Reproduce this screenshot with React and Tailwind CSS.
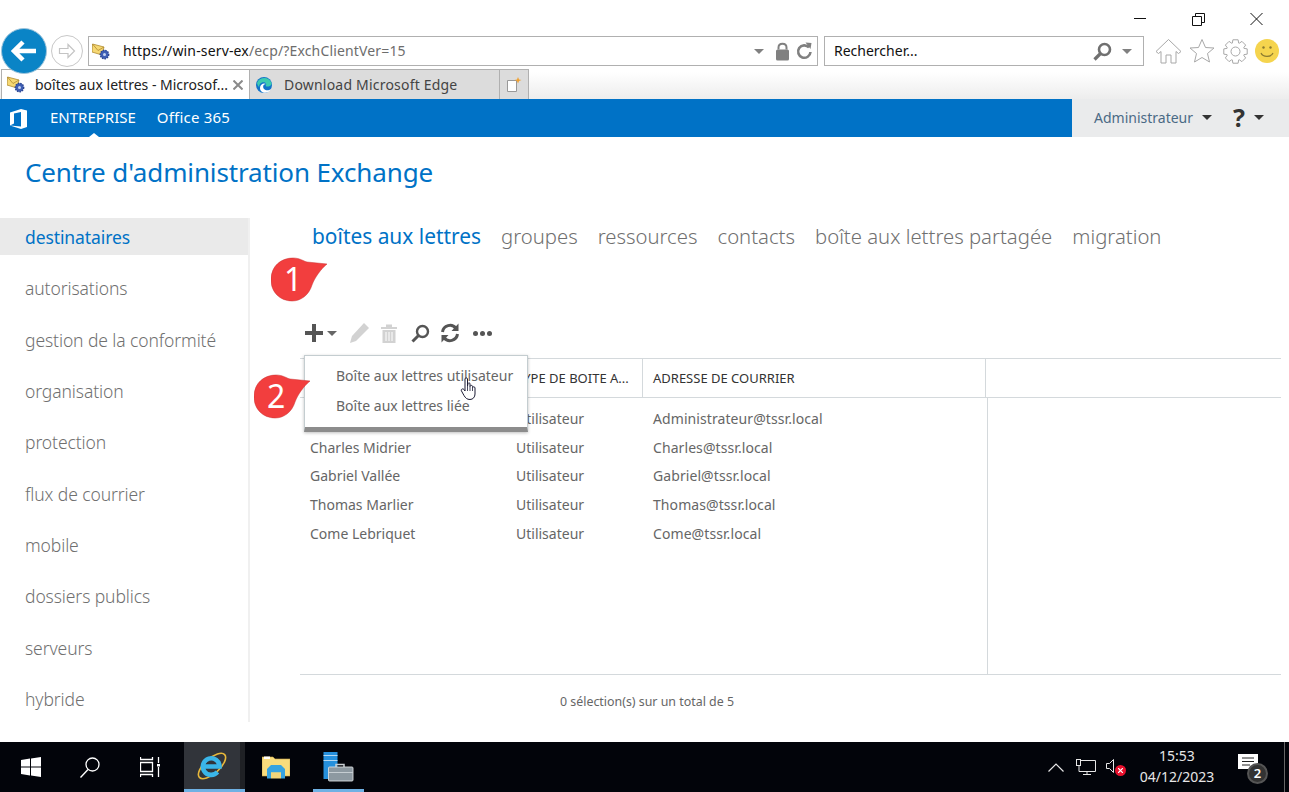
import React from 'react'

const Caret = ({ className = '' }) => <span className={`inline-block w-0 h-0 border-x-[5px] border-x-transparent border-t-[5px] ${className}`} />

const MailIcon = () => (
  <svg width="18" height="17" viewBox="0 0 18 17" className="shrink-0">
    <path d="M0.5 1 L12 4 L10 12 L0 9 Z" fill="#f6d873" stroke="#b08a2e" strokeWidth="0.8" />
    <path d="M0.5 1 L6 7.5 L12 4" fill="none" stroke="#b08a2e" strokeWidth="0.8" />
    <circle cx="12.5" cy="11.5" r="4.2" fill="#3f5fb5" stroke="#2b4590" strokeWidth="1.4" strokeDasharray="1.5 1" />
    <circle cx="12.5" cy="11.5" r="1.5" fill="#c6d4f0" />
  </svg>
)

const EdgeIcon = () => (
  <svg width="18" height="18" viewBox="0 0 18 18" className="shrink-0">
    <circle cx="9" cy="9" r="8" fill="#1173c9" />
    <path d="M2 7 C4 1 14 0 16.5 7 C17 10 13 11.5 10.5 10 C12.5 8 10 5.5 7 6.5 C5 7.2 4 9 4.2 11 C3 10 2.2 8.5 2 7 Z" fill="#3ccbb0" />
    <path d="M5 12 C5 8 9 6.5 11 8 C8 8 7.5 11 9 13 C11 15 14 14.5 16 13 C14 17 9 18 6.5 15.5 C5.5 14.5 5 13.5 5 12 Z" fill="#fff" />
  </svg>
)

// outline of a cog with 8 teeth
const gearPath = () => {
  const pts = []
  for (let i = 0; i < 8; i++) {
    const a = (i * Math.PI) / 4
    ;[[-0.36, 9], [-0.22, 12], [0.22, 12], [0.36, 9]].forEach(([da, r]) => {
      pts.push(`${(12.5 + r * Math.cos(a + da)).toFixed(2)} ${(12.5 + r * Math.sin(a + da)).toFixed(2)}`)
    })
  }
  return `M${pts.join(' L')} Z`
}

const sideItems = ['destinataires', 'autorisations', 'gestion de la conformité', 'organisation', 'protection', 'flux de courrier', 'mobile', 'dossiers publics', 'serveurs', 'hybride']
const tabs = ['boîtes aux lettres', 'groupes', 'ressources', 'contacts', 'boîte aux lettres partagée', 'migration']
const rows = [
  ['', 'Utilisateur', 'Administrateur@tssr.local'],
  ['Charles Midrier', 'Utilisateur', 'Charles@tssr.local'],
  ['Gabriel Vallée', 'Utilisateur', 'Gabriel@tssr.local'],
  ['Thomas Marlier', 'Utilisateur', 'Thomas@tssr.local'],
  ['Come Lebriquet', 'Utilisateur', 'Come@tssr.local'],
]

const Callout = ({ n, className }) => (
  <div className={`absolute w-[62px] h-[46px] ${className}`}>
    <svg width="62" height="46" viewBox="0 0 62 46" className="absolute left-0 top-0">
      <path d="M0 23 C0 8 11 1 22 1 C29 1 32 4 36 5 L56 7 C50 12 44 20 41 28 C38 38 30 44 21 44 C9 44 0 35 0 23 Z" fill="#f23e3e" stroke="#c93333" strokeWidth="0.5" />
    </svg>
    <span className="absolute left-[13px] top-0 w-[18px] text-center text-white text-[32px] leading-[44px]">{n}</span>
  </div>
)

const HandCursor = () => (
  <svg width="18" height="24" viewBox="0 0 18 24" className="absolute left-[460px] top-[377px]">
    <path d="M5 2 C5 0.5 7.5 0.5 7.5 2 L7.5 9 L8 6.5 C8.5 5.5 10 5.5 10 7 L10 9.5 C10.5 8 12.5 8 12.5 9.5 L12.5 10.5 C13 9.5 15 9.5 15 11 L15 17 C15 20 13 22.5 10 22.5 C7 22.5 5.5 21 4 18.5 L1.5 14 C0.5 12.5 2.5 11 4 12.5 L5 14 Z" fill="#fff" stroke="#1b1b33" strokeWidth="1" />
    <path d="M7.5 9 V14 M10 9.5 V14 M12.5 10.5 V14" stroke="#1b1b33" strokeWidth="0.8" />
  </svg>
)

function App() {
  return (
    <div className="relative w-[1289px] h-[792px] overflow-hidden bg-white flex flex-col font-['Noto_Sans',sans-serif] text-[#707070]">
      {/* window controls */}
      <div className="h-[36px] flex justify-end items-start shrink-0">
        <svg width="160" height="36" viewBox="0 0 160 36" className="mr-[4px]" stroke="#111" fill="none" strokeWidth="1">
          <path d="M9 18.5 H21" />
          <path d="M67.5 16.5 H76.5 V25.5 H67.5 Z M70.5 16 V13.5 H79.5 V22.5 H77" />
          <path d="M125.5 13 L137.5 25 M137.5 13 L125.5 25" />
        </svg>
      </div>

      {/* address bar */}
      <div className="h-[33px] flex items-start shrink-0 relative">
        <div className="absolute left-[1px] top-[-8px] w-[46px] h-[46px] rounded-full bg-[#0a84c6] border border-[#9ec5dc] flex items-center justify-center">
          <svg width="26" height="24" viewBox="0 0 26 24" fill="none" stroke="#fff" strokeWidth="4.5">
            <path d="M12 3 L3 12 L12 21 M4 12 H25" />
          </svg>
        </div>
        <div className="ml-[51px] mt-[-1px] w-[32px] h-[32px] rounded-full border border-[#c8c8c8] flex items-center justify-center shrink-0">
          <svg width="18" height="16" viewBox="0 0 18 16" fill="none" stroke="#c4c4c4" strokeWidth="1.2">
            <path d="M10 1.5 L16.5 8 L10 14.5 V10.5 H1.5 V5.5 H10 Z" />
          </svg>
        </div>
        <div className="ml-[5px] w-[730px] h-[30px] border border-[#b0b0b0] flex items-center pl-[3px] pr-[5px] shrink-0">
          <MailIcon />
          <span className="ml-[13px] mb-[2px] text-[14px] tracking-[0.15px] text-[#111] whitespace-nowrap">https://win-serv-ex<span className="text-[#6d6d6d]">/ecp/?ExchClientVer=15</span></span>
          <Caret className="ml-auto border-t-[#808080]" />
          <svg width="15" height="19" viewBox="0 0 15 18" className="ml-[11px]" fill="#808080">
            <rect x="1" y="7" width="13" height="11" rx="1.5" />
            <path d="M3.5 7 V5 C3.5 0 11.5 0 11.5 5 V7" fill="none" stroke="#808080" strokeWidth="2" />
          </svg>
          <svg width="16" height="18" viewBox="0 0 16 18" className="ml-[6px]" fill="none" stroke="#808080" strokeWidth="2.6">
            <path d="M13 5.5 A6.2 6.2 0 1 0 14.5 10" />
            <path d="M9.5 0.5 L15.5 1 L14.5 7 Z" fill="#808080" stroke="none" />
          </svg>
        </div>
        <div className="ml-[6px] w-[320px] h-[30px] border border-[#b0b0b0] flex items-center pl-[9px] pr-[11px] shrink-0">
          <span className="text-[14px] mb-[2px] text-[#111]">Rechercher...</span>
          <svg width="19" height="19" viewBox="0 0 19 19" className="ml-auto mr-[1px]" fill="none" stroke="#707070">
            <circle cx="11.5" cy="7.5" r="5.5" strokeWidth="2.6" />
            <path d="M7.5 11.5 L1.5 17.5" strokeWidth="3.2" />
          </svg>
          <Caret className="ml-[9px] border-t-[#808080]" />
        </div>
        <div className="ml-[11px] flex items-center gap-[7px] shrink-0 mt-[2px]">
          <svg width="27" height="26" viewBox="0 0 27 26" fill="none" stroke="#a8a8a8" strokeWidth="1">
            <path d="M1 13.5 L13.5 1.5 L26 13.5 L23.5 15.5 L21 13.5 V25 H16 V17 H11 V25 H6 V13.5 L3.5 15.5 Z" />
          </svg>
          <svg width="26" height="26" viewBox="0 0 26 26" fill="none" stroke="#a8a8a8" strokeWidth="1">
            <path d="M13 1.5 L16.5 9.5 L25 10 L18.5 15.5 L20.5 24 L13 19.5 L5.5 24 L7.5 15.5 L1 10 L9.5 9.5 Z" />
          </svg>
          <svg width="25" height="25" viewBox="0 0 25 25" fill="none" stroke="#a8a8a8" strokeWidth="1" className="ml-[1px]">
            <circle cx="12.5" cy="12.5" r="4.5" />
            <path d={gearPath()} />
          </svg>
          <svg width="24" height="24" viewBox="0 0 24 24">
            <circle cx="12" cy="12" r="12" fill="#f5d44e" />
            <circle cx="8.5" cy="8.5" r="1.2" fill="#8a7a30" />
            <circle cx="15.5" cy="8.5" r="1.2" fill="#8a7a30" />
            <path d="M6 14 C8 18.5 16 18.5 18 14" fill="none" stroke="#8a7a30" strokeWidth="1.2" />
          </svg>
        </div>
      </div>

      {/* tab strip */}
      <div className="h-[30px] flex shrink-0 bg-gradient-to-b from-white from-10% to-[#ededed]">
        <div className="ml-[1px] w-[249px] bg-white border border-b-0 border-[#b0b0b0] flex items-center pl-[5px] pr-[6px] shrink-0">
          <MailIcon />
          <span className="ml-[10px] mb-[1px] text-[14px] text-[#222] whitespace-nowrap">boîtes aux lettres - Microsof...</span>
          <svg width="10" height="10" viewBox="0 0 10 10" className="ml-auto" stroke="#8a8a8a" strokeWidth="2"><path d="M0.5 0.5 L9.5 9.5 M9.5 0.5 L0.5 9.5" /></svg>
        </div>
        <div className="w-[250px] bg-[#dcdcdc] border-t border-r border-[#b0b0b0] flex items-center pl-[5px] shrink-0">
          <EdgeIcon />
          <span className="ml-[11px] mb-[1px] text-[14px] tracking-[0.2px] text-[#444] whitespace-nowrap">Download Microsoft Edge</span>
        </div>
        <div className="w-[29px] bg-[#dcdcdc] border-t border-r border-[#b0b0b0] flex items-center justify-center shrink-0">
          <svg width="16" height="16" viewBox="0 0 16 16">
            <path d="M1.5 3.5 H10.5 V14.5 H1.5 Z" fill="#fff" stroke="#999" />
            <path d="M12 0 L13 2.5 L15.5 3 L13 4 L12 6.5 L11 4 L8.5 3 L11 2.5 Z" fill="#f0a030" />
          </svg>
        </div>
      </div>

      {/* suite bar */}
      <div className="h-[38px] bg-[#0072c6] flex shrink-0 relative">
        <svg width="20" height="22" viewBox="0 0 20 22" className="ml-[9px] mt-[9px] shrink-0" fill="#fff">
          <path d="M1 4.5 L12 1 L18 2.5 V19 L12 21 L1 17.5 L12 18.5 V4 L5 5.5 V15.5 L1 17.5 Z" />
        </svg>
        <span className="ml-[21px] text-white text-[15px] leading-[36px]">ENTREPRISE</span>
        <span className="ml-[21px] text-white text-[15px] tracking-[0.2px] leading-[36px]">Office 365</span>
        <span className="absolute left-[89px] bottom-0 w-0 h-0 border-x-[5px] border-x-transparent border-b-[4px] border-b-white" />
        <div className="ml-auto w-[217px] bg-[#eaebec] flex items-center pl-[22px] pb-[2px] shrink-0">
          <span className="text-[14px] text-[#4a6a85]">Administrateur</span>
          <Caret className="ml-[9px] border-t-[#333]" />
          <span className="ml-[21px] text-[25px] font-bold leading-none text-[#333]">?</span>
          <Caret className="ml-[9px] border-t-[#333]" />
        </div>
      </div>

      {/* title */}
      <div className="h-[81px] pl-[25px] pt-[17px] shrink-0">
        <h1 className="text-[26px] tracking-[-0.13px] leading-[36px] text-[#0072c6]">Centre d'administration Exchange</h1>
      </div>

      <div className="flex flex-1 min-h-0">
        <nav className="w-[250px] h-[504px] border-r-2 border-[#f0f0f0] shrink-0">
          {sideItems.map((item, i) => (
            <div key={item} className={`h-[37px] mb-[14.33px] pl-[25px] text-[17.5px] tracking-[-0.1px] leading-[39px] font-light ${i === 0 ? 'bg-[#eaeaea] text-[#0072c6] !font-normal' : 'text-[#707070]'}`}>{item}</div>
          ))}
        </nav>

        <main className="flex-1 min-w-0 pl-[50px] pr-[8px]">
          <div className="ml-[12px] flex gap-[20px] h-[38px] leading-[37px] whitespace-nowrap">
            {tabs.map((t, i) => <span key={t} className={i === 0 ? 'text-[20.9px] text-[#0072c6]' : 'text-[20.3px] font-light text-[#707070]'}>{t}</span>)}
          </div>

          {/* toolbar */}
          <div className="mt-[65px] h-[24px] flex items-center ml-[5px]">
            <svg width="18" height="18" viewBox="0 0 18 18" fill="#555"><path d="M7 0 H11 V7 H18 V11 H11 V18 H7 V11 H0 V7 H7 Z" /></svg>
            <Caret className="ml-[4px] border-t-[#666]" />
            <svg width="22" height="22" viewBox="0 0 22 22" className="ml-[11px]" fill="#d2d2d2"><path d="M16 1 L21 6 L8 19 L2 21 L4 14 Z" /></svg>
            <svg width="16" height="19" viewBox="0 0 16 19" className="ml-[11px]" fill="#d2d2d2">
              <path d="M0 3 H16 V5 H0 Z M5 0.5 H11 V3 H5 Z M1.5 6 H14.5 V19 H1.5 Z" />
              <path d="M5 8 V17 M8 8 V17 M11 8 V17" stroke="#fff" strokeWidth="1" />
            </svg>
            <svg width="19" height="19" viewBox="0 0 19 19" className="ml-[14px]" fill="none" stroke="#555">
              <circle cx="11.5" cy="7.5" r="5.5" strokeWidth="2.4" />
              <path d="M7.5 11.5 L1.5 17.5" strokeWidth="3" />
            </svg>
            <svg width="20" height="20" viewBox="0 0 20 20" className="ml-[10px]" fill="none" stroke="#555" strokeWidth="3">
              <path d="M2.5 9 A7.5 7.5 0 0 1 16 5.5 M17.5 11 A7.5 7.5 0 0 1 4 14.5" />
              <path d="M18.5 0.5 V8 H11.5 Z M1.5 19.5 V12 H8.5 Z" fill="#555" stroke="none" />
            </svg>
            <div className="ml-[13px] flex gap-[2px]">
              <span className="w-[5px] h-[5px] rounded-full bg-[#555]" />
              <span className="w-[5px] h-[5px] rounded-full bg-[#555]" />
              <span className="w-[5px] h-[5px] rounded-full bg-[#555]" />
            </div>
          </div>

          {/* table */}
          <div className="mt-[13px] h-[40px] border-y border-[#d4d9dc] flex text-[13px] leading-[38px] text-[#333] whitespace-nowrap">
            <div className="w-[206px] shrink-0" />
            <div className="w-[137px] pl-[10px] border-r border-[#d4d9dc] shrink-0 overflow-hidden">TYPE DE BOITE A...</div>
            <div className="w-[343px] pl-[10px] border-r border-[#d4d9dc] shrink-0">ADRESSE DE COURRIER</div>
          </div>
          <div className="h-[277px] border-b border-[#d4d9dc] flex">
            <div className="w-[688px] border-r border-[#d4d9dc] pt-[7px] text-[14px] text-[#666] leading-[28.7px] shrink-0">
              {rows.map((r) => (
                <div key={r[2]} className="flex whitespace-nowrap">
                  <div className="w-[206px] pl-[10px]">{r[0]}</div>
                  <div className="w-[137px] pl-[10px]">{r[1]}</div>
                  <div className="pl-[10px] tracking-[0.08px]">{r[2]}</div>
                </div>
              ))}
            </div>
          </div>
          <div className="mt-[17px] ml-[260px] text-[12.4px] leading-[20px] text-[#666]">0 sélection(s) sur un total de 5</div>
        </main>
      </div>

      {/* taskbar */}
      <footer className="h-[50px] bg-[#02040a] flex items-stretch shrink-0 text-white">
        <div className="w-[61px] flex items-center justify-center">
          <svg width="20" height="20" viewBox="0 0 20 20" fill="#fff"><path d="M0 3 L9 1.6 V9.5 H0 Z M10 1.4 L20 0 V9.5 H10 Z M0 10.5 H9 V18.4 L0 17 Z M10 10.5 H20 V20 L10 18.6 Z" /></svg>
        </div>
        <div className="w-[57px] flex items-center justify-center">
          <svg width="20" height="21" viewBox="0 0 20 21" fill="none" stroke="#fff" strokeWidth="1.3"><circle cx="12.5" cy="7.5" r="6.5" /><path d="M8 12.5 L0.5 20.5" /></svg>
        </div>
        <div className="w-[66px] pr-[2px] flex items-center justify-center">
          <svg width="20" height="20" viewBox="0 0 20 20" fill="none" stroke="#fff" strokeWidth="1.3">
            <path d="M0.5 0 V2.5 H12.5 V0 M0.5 5.5 H12.5 V14.5 H0.5 Z M0.5 20 V17.5 H12.5 V20 M18.5 0 V6 M18.5 10 V20" />
            <rect x="17" y="7" width="3" height="2.5" fill="#fff" stroke="none" />
          </svg>
        </div>
        <div className="w-[56px] bg-[#31343a] border-b-[3px] border-[#6fb1e4] flex items-center justify-center">
          <svg width="30" height="30" viewBox="0 0 30 30" fill="none">
            <ellipse cx="15" cy="15" rx="17" ry="7.5" transform="rotate(-42 15 15)" stroke="#e8b83a" strokeWidth="1.6" />
            <path d="M7.5 15.5 H22.5 A8.3 8.3 0 1 0 20.5 21" stroke="#3ab5e8" strokeWidth="4.6" />
          </svg>
        </div>
        <div className="w-[5px] bg-[#1f2125] border-b-[3px] border-[#6fb1e4]" />
        <div className="w-[62px] flex items-center justify-center">
          <svg width="28" height="24" viewBox="0 0 28 24">
            <path d="M0 2 H11 L13 4 H28 V21 H0 Z" fill="#f9dc7c" stroke="#c9a94a" strokeWidth="0.6" />
            <path d="M2 1.5 H8 V4 H2 Z" fill="#fff" />
            <path d="M5 23.5 V14 L9 10 H19 L23 14 V23.5 H19 V17.5 H9 V23.5 Z" fill="#37a3e0" />
            <rect x="9" y="17.5" width="10" height="6" fill="#f3d57a" />
          </svg>
        </div>
        <div className="ml-[6px] w-[51px] border-b-[3px] border-[#6fb1e4] flex items-center pl-[10px] pt-[3px]">
          <svg width="31" height="30" viewBox="0 0 31 30">
            <rect x="0.5" y="0" width="14" height="27" fill="#2690dc" />
            <rect x="0.5" y="3" width="14" height="1" fill="#b5d9f2" />
            <rect x="0.5" y="8" width="14" height="1" fill="#b5d9f2" />
            <path d="M13 15 V12.5 H21 V15" fill="none" stroke="#c9ced2" strokeWidth="1.5" />
            <rect x="5.5" y="15" width="24.5" height="14" rx="1" fill="#8d99a1" stroke="#d8dcdf" strokeWidth="0.9" />
            <rect x="6" y="20" width="24" height="1" fill="#c5cdd2" />
          </svg>
        </div>

        <div className="ml-auto flex items-center">
          <svg width="16" height="9" viewBox="0 0 16 9" fill="none" stroke="#e6e6e6" strokeWidth="1.2"><path d="M0.5 8.5 L8 1 L15.5 8.5" /></svg>
          <svg width="20" height="17" viewBox="0 0 20 17" className="ml-[12px]" fill="none" stroke="#e6e6e6" strokeWidth="1">
            <path d="M5 1.5 H19.5 V12.5 H3 V7 M11 12.5 V15.5 M7 15.5 H15" />
            <rect x="0.5" y="0.5" width="4" height="6" />
          </svg>
          <div className="relative ml-[10px] w-[20px] h-[20px]">
            <svg width="10" height="14" viewBox="0 0 10 14" className="absolute left-0 top-[2px]" fill="none" stroke="#e6e6e6" strokeWidth="1"><path d="M0.5 4.5 H3.5 L7.5 0.5 V13.5 L3.5 9.5 H0.5 Z" /></svg>
            <span className="absolute left-[9px] top-[8px] w-[11px] h-[11px] rounded-full bg-[#e8112d] flex items-center justify-center">
              <svg width="5" height="5" viewBox="0 0 5 5" stroke="#fff" strokeWidth="1.2"><path d="M0 0 L5 5 M5 0 L0 5" /></svg>
            </span>
          </div>
          <div className="ml-[13px] mb-[2px] w-[76px] text-center text-[14px] leading-[21px] text-[#e6e6e6] whitespace-nowrap">
            <div>15:53</div>
            <div>04/12/2023</div>
          </div>
          <div className="relative ml-[23px] w-[23px] h-[30px] mt-[2px]">
            <svg width="20" height="16" viewBox="0 0 20 16" className="absolute left-0 top-[1px]" fill="#fff">
              <path d="M0 0 H20 V15 H0 Z" />
              <path d="M4 4 H16 M4 7.5 H16 M4 11 H12" stroke="#222" strokeWidth="1" />
            </svg>
            <span className="absolute left-[9px] top-[10px] w-[21px] h-[21px] rounded-full bg-[#333] border-2 border-[#555] flex items-center justify-center text-[13px] font-semibold leading-none">2</span>
          </div>
          <div className="ml-[23px] w-[1px] h-full bg-[#666] mr-[4px]" />
        </div>
      </footer>

      {/* overlays: dropdown, callouts and cursor */}
      <div className="absolute left-[304px] top-[355px] w-[224px] h-[77px] bg-white border border-[#c4cdd0] border-b-[5px] border-b-[#8c8c8c] shadow-[0_1px_3px_rgba(0,0,0,0.25)] pl-[31px] pt-[5px] text-[14px] leading-[30px] text-[#666] whitespace-nowrap">
        <div>Boîte aux lettres utilisateur</div>
        <div>Boîte aux lettres liée</div>
      </div>
      <Callout n="1" className="left-[271px] top-[257px]" />
      <Callout n="2" className="left-[254px] top-[374px]" />
      <HandCursor />
    </div>
  )
}

export default App
